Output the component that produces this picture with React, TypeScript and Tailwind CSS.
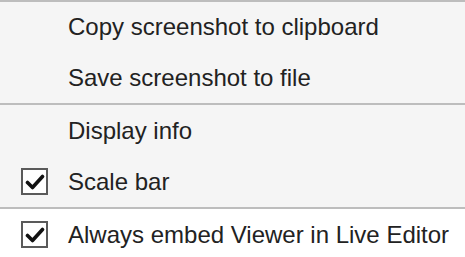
import React from 'react';

function Check() {
    return (
        <div className="w-[27px] h-[27px] border-2 border-[#5a5a5a] bg-white flex items-center justify-center">
            <svg width="20" height="18" viewBox="0 0 20 18">
                <path d="M2.5 9.5 L7.5 14.5 L17.5 3.5" fill="none" stroke="#111" strokeWidth="3.6" strokeLinecap="round" strokeLinejoin="round" />
            </svg>
        </div>
    );
}

function Item({ label, checked }: { label: string; checked?: boolean }) {
    return (
        <div className="h-[51px] flex items-center">
            <div className="w-[68px] pl-[21px] flex items-center">
                {checked && <Check />}
            </div>
            <span className="text-[24px] text-[#222] leading-none">{label}</span>
        </div>
    );
}

export default function App() {
    return (
        <div className="w-[465px] h-[257px] overflow-hidden bg-white" style={{ fontFamily: '"Liberation Sans", Arial, sans-serif' }}>
            <div className="bg-[#f5f5f5] border-t-2 border-[#bdbdbd]">
                <div className="h-[101px] flex flex-col justify-center">
                    <Item label="Copy screenshot to clipboard" />
                    <Item label="Save screenshot to file" />
                </div>
                <div className="border-t-2 border-[#bdbdbd] h-[104px] flex flex-col justify-center">
                    <Item label="Display info" />
                    <Item label="Scale bar" checked />
                </div>
            </div>
            <div className="border-t-2 border-[#bdbdbd] bg-white">
                <Item label="Always embed Viewer in Live Editor" checked />
            </div>
        </div>
    );
}
